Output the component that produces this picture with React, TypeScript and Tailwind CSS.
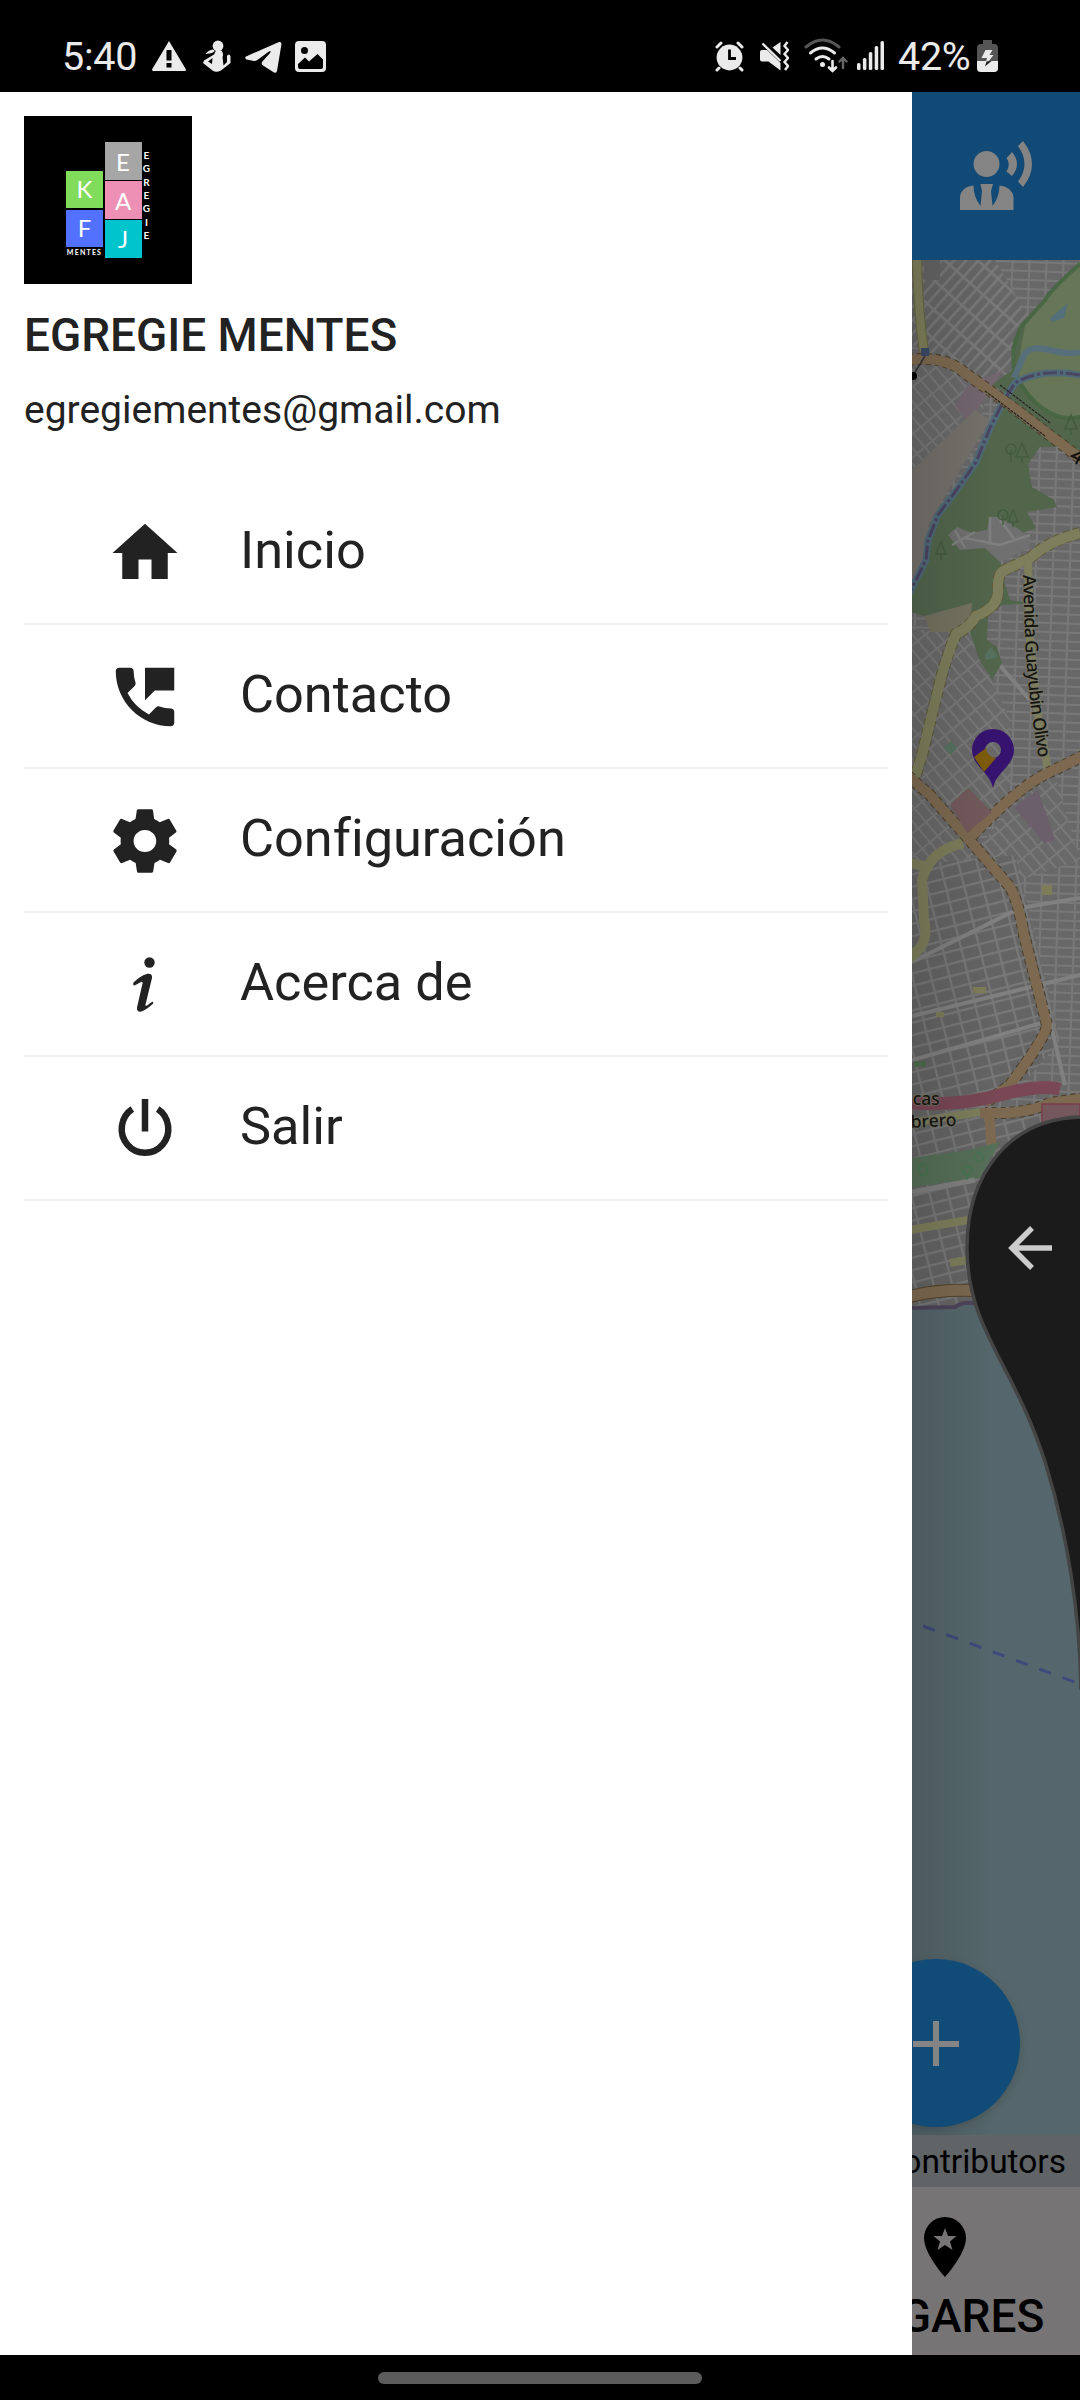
import type { ComponentType, ReactNode } from "react";
import { IoMdSettings } from "react-icons/io";
import { MdHome, MdPermPhoneMsg } from "react-icons/md";

type IconType = ComponentType<{ size?: number; className?: string }>;

function InfoIcon({ size = 78, className }: { size?: number; className?: string }) {
  return (
    <svg width={size} height={size} viewBox="0 0 78 78" className={className} fill="currentColor">
      <circle cx="43.500" cy="16.500" r="5.200" />
      <path d="M27.500 36.500Q34 30 41.500 27.800Q46.500 27 46 32L39.500 58.500Q39 60.500 41 59.500L46.500 55.500L47.500 57.300Q41 63.500 35.500 65.500Q30.500 66.500 31 61.500L36.500 37.500Q37 35 35 36L28.500 39.500Q26.500 39 27.500 36.500Z" />
    </svg>
  );
}

function PowerIcon({ size = 78, className }: { size?: number; className?: string }) {
  return (
    <svg width={size} height={size} viewBox="0 0 78 78" className={className} fill="none" stroke="currentColor" strokeWidth="6.500">
      <path d="M39 9V41.500" />
      <path d="M26.300 19A23.300 23.800 0 1 0 51.700 19" />
    </svg>
  );
}

const menu: { label: string; Icon: IconType }[] = [
  { label: "Inicio", Icon: MdHome },
  { label: "Contacto", Icon: MdPermPhoneMsg },
  { label: "Configuración", Icon: IoMdSettings },
  { label: "Acerca de", Icon: InfoIcon },
  { label: "Salir", Icon: PowerIcon },
];

function Glyph({ w, h, className = "", children }: { w: number; h: number; className?: string; children: ReactNode }) {
  return (
    <svg width={w} height={h} viewBox={`0 0 ${w} ${h}`} className={"shrink-0 " + className} fill="#ebebeb">
      {children}
    </svg>
  );
}

function StatusBar() {
  return (
    <div className="flex h-[92px] shrink-0 items-start bg-black pt-[36px] pl-[62px] pr-[82px] text-[#ebebeb]">
      <span className="w-[90px] text-[39.5px] leading-[41px] tracking-[-0.2px]">5:40</span>
      <Glyph w={34} h={40}>
        <path d="M17 5 L34 33.5 Q34 35 32.5 35 H1.5 Q0 35 0 33.5 Z" />
        <path d="M14.5 14h5v10.500h-5zM14.500 27h5v4.500h-5z" fill="#000" />
      </Glyph>
      <Glyph w={28} h={40} className="ml-[17px]">
        <circle cx="15" cy="10" r="5.400" />
        <path d="M2.500 18Q5 14 10 13.500L12 15 9 17 3 18ZM13 14.500h5.500Q21 18 19.500 21L20.500 29.500 24 26V20Q26.500 17 27.500 20.500V27L18 34.500Q13 37 9.500 34.500L0 27 1 24.500 11 18.500Z" />
        <path d="M5 25.500l4.500-3.500-.500 6z" fill="#000" />
      </Glyph>
      <Glyph w={37} h={40} className="ml-[14px]">
        <path d="M1 20.500Q-1 22 1.500 23.500L9 25Q11 25 13 23.500L24 15.500Q27 14.500 25 17L17 26Q16 28 18 29.500L29 36.500Q31.500 37.500 32 35L36.500 8Q36.500 5.500 34 6Z" />
      </Glyph>
      <Glyph w={31} h={40} className="ml-[13px]">
        <rect y="5" width="31" height="31" rx="4" />
        <path d="M3 28l7-6.500 4 4L22.500 18l5.500 5.500V31q0 2-2 2H5q-2 0-2-2z" fill="#000" />
        <circle cx="9.500" cy="14.500" r="3.500" fill="#000" />
      </Glyph>

      <div className="flex-1" />

      <Glyph w={29} h={40}>
        <circle cx="14.500" cy="21.500" r="12.900" />
        <path d="M2 11l4-4M27 11l-4-4M4 32l-2 2M25 32l2 2" stroke="#ebebeb" strokeWidth="3" strokeLinecap="round" />
        <path d="M14.500 13.500v9h6.500" stroke="#000" strokeWidth="2.800" fill="none" />
      </Glyph>
      <Glyph w={29} h={40} className="ml-[16px]">
        <path d="M0 16q0-2 2-2h5l13.500 13v7.500L8.500 25.500H2q-2 0-2-2zM20.500 6v13L12.500 11.500z" />
        <path d="M2.500 7.500L20.500 25" stroke="#ebebeb" strokeWidth="2.400" />
        <path d="M27.500 6l-3 4 3.500 4-3.500 4 3.500 4-3.500 4 3.500 4-3 4" fill="none" stroke="#ebebeb" strokeWidth="2.400" />
      </Glyph>
      <Glyph w={44} h={40} className="ml-[15px]">
        <g fill="none" strokeLinecap="round" strokeWidth="3">
          <path d="M2 11Q18.500-3 35 11" stroke="#555" />
          <path d="M6.500 17Q18.500 7 30.500 17" stroke="#ebebeb" />
          <path d="M12 23Q18.500 18 25 23" stroke="#ebebeb" />
          <path d="M28.500 25v10M25 31.500l3.500 3.500 3.500-3.500" stroke="#ebebeb" strokeWidth="2.600" />
          <path d="M39 32V22M35.500 25.500L39 22l3.500 3.500" stroke="#666" strokeWidth="2.400" />
        </g>
        <circle cx="18.500" cy="28.500" r="2.500" />
      </Glyph>
      <Glyph w={28} h={40} className="ml-[9px]">
        <rect x="0" y="27" width="3.500" height="7" rx="1.500" />
        <rect x="5.900" y="22" width="3.500" height="12" rx="1.500" />
        <rect x="11.800" y="16" width="3.500" height="18" rx="1.500" />
        <rect x="17.700" y="10" width="3.500" height="24" rx="1.500" />
        <rect x="23.500" y="5" width="3.500" height="29" rx="1.500" />
      </Glyph>
      <span className="ml-[13px] w-[79px] text-[39.5px] leading-[41px] tracking-[-0.3px]">42%</span>
      <Glyph w={21} h={40}>
        <path d="M6 4h9v4h2q4 0 4 4v20q0 4-4 4H4q-4 0-4-4V12q0-4 4-4h2z" fill="#555" />
        <path d="M0 25h21v7q0 4-4 4H4q-4 0-4-4z" />
        <path d="M8.500 14h7l-3 5h4L8 30l2-8H4.500z" />
        <path d="M12 25h2.500L8 30.500l1.500-5z" fill="#222" />
      </Glyph>
    </div>
  );
}

function Tile({ letter, className }: { letter: string; className: string }) {
  return <div className={"flex w-[37px] items-center justify-center font-[Lato] text-[24px] leading-none font-normal text-white " + className}>{letter}</div>;
}

function Logo() {
  return (
    <div className="flex size-[168px] items-start bg-black pt-[26px] pl-[42px] text-white">
      <div className="flex w-[37px] flex-col pt-[29px]">
        <Tile letter="K" className="h-[37px] bg-[#82dc5b] pb-px" />
        <Tile letter="F" className="mt-[2px] h-[37px] bg-[#5271ff] pb-px" />
        <span className="mt-[1px] text-center font-[Lato] text-[7px] leading-[8px] font-bold tracking-[1.2px] whitespace-nowrap">MENTES</span>
      </div>
      <div className="ml-[1.500px] flex w-[37px] flex-col gap-[1px]">
        <Tile letter="E" className="h-[38px] bg-[#a6a6a6] pt-px" />
        <Tile letter="A" className="h-[38px] bg-[#ee90b5] pt-px" />
        <Tile letter="J" className="h-[38px] bg-[#00c4cc] pb-px" />
      </div>
      <div className="mt-[7px] ml-[1px] flex w-[8px] flex-col items-center font-[Lato] text-[10px] leading-[13.33px] font-bold">
        {"EGREGIE".split("").map((c, i) => (
          <span key={i}>{c}</span>
        ))}
      </div>
    </div>
  );
}

function Drawer() {
  return (
    <aside className="relative z-10 flex w-[912px] shrink-0 flex-col bg-white px-[24px] pt-[24px] text-[#222]">
      <Logo />
      <h1 className="mt-[25px] text-[45.9px] leading-[52px] font-medium">EGREGIE MENTES</h1>
      <p className="mt-[26px] text-[39px] leading-[46px]">egregiementes@gmail.com</p>
      <nav className="mt-[48px]">
        {menu.map(({ label, Icon }) => (
          <div key={label} className="flex h-[144px] items-center border-b-2 border-[#eee] pl-[81.5px]">
            <Icon size={78} className="mt-[2px]" />
            <span className="ml-[56.5px] pb-[4px] text-[52.3px] leading-[60px] [font-variant-ligatures:none]">{label}</span>
          </div>
        ))}
      </nav>
    </aside>
  );
}

function MapView() {
  return (
    <svg width="168" height="1875" viewBox="912 260 168 1875" className="block shrink-0">
      <defs>
        <pattern id="diag" width="9" height="22" patternUnits="userSpaceOnUse" patternTransform="rotate(42)">
          <rect width="9" height="22" fill="#666" />
          <path d="M0 0H9M0 0V22" stroke="#797979" strokeWidth="5" />
        </pattern>
        <pattern id="grid" width="17" height="9" patternUnits="userSpaceOnUse" patternTransform="rotate(2)">
          <rect width="17" height="9" fill="#686868" />
          <path d="M0 0H17M0 0V9" stroke="#787878" strokeWidth="4" />
        </pattern>
        <pattern id="tilt" width="18" height="12" patternUnits="userSpaceOnUse" patternTransform="rotate(-14)">
          <rect width="18" height="12" fill="#646464" />
          <path d="M0 0H18M0 0V12" stroke="#787878" strokeWidth="4.500" />
        </pattern>
        <pattern id="slant" width="10" height="18" patternUnits="userSpaceOnUse" patternTransform="rotate(-40)">
          <rect width="10" height="18" fill="#696969" />
          <path d="M0 0H10M0 0V18" stroke="#787878" strokeWidth="4" />
        </pattern>
        <linearGradient id="edge" x1="0" x2="1">
          <stop offset="0" stopColor="#000" stopOpacity=".12" />
          <stop offset=".5" stopColor="#000" stopOpacity="0" />
        </linearGradient>
      </defs>

      <rect x="912" y="260" width="168" height="1080" fill="url(#grid)" />
      <path d="M912 260H995L1030 320 1010 400 912 345Z" fill="url(#diag)" />
      <path d="M912 355L990 380 972 455 912 480Z" fill="url(#slant)" />
      <path d="M912 630H968L1010 720 1010 810 912 850Z" fill="url(#slant)" />
      <path d="M912 790L980 845 1050 760 1080 860 1020 880 912 880Z" fill="url(#slant)" />
      <path d="M912 865L1015 855 1060 1040 1010 1100 912 1105Z" fill="url(#tilt)" />
      <path d="M912 1110H1080V1345H912Z" fill="url(#tilt)" />
      <path d="M912 962L1020 908 1080 898M912 1016L1080 975M912 1060L1045 1022M960 620L1030 700M1045 1000L1065 1085" stroke="#808080" strokeWidth="4" fill="none" />

      <path d="M924 260h16v20h-16z" fill="#646464" />
      <path d="M968 385L1003 370 968 424 955 405Z" fill="#73666f" />
      <path d="M912 470L975 410 990 420 960 470 928 525 926 555 912 585Z" fill="#74716b" />

      <path d="M1080 262L1062 280 1045 300 1025 322 1013 340 1015 368 992 385 1004 392 992 430 976 462 958 488 938 515 928 540 926 560 912 590V612L924 616 972 603 970 632 978 657 992 680 1002 663 997 647 987 640 988 617 1002 605 1035 604 1010 600 1004 580 1000 560 988 548 1030 530 1036 528 1027 512 1057 507 1054 500 1032 487 1028 464 1040 447 1067 447 1080 457Z" fill="#52664c" />
      <path d="M1080 262L1045 300 1025 325 1017 372Q1045 430 1080 415Z" fill="#667657" />
      <path d="M1080 264Q1050 290 1045 300L1020 328 1013 350 1014 375Q1045 425 1080 417" fill="none" stroke="#44653f" strokeWidth="4" opacity=".8" />
      <path d="M1050 318L1068 303 1064 318 1052 322Z" fill="#54707a" />
      <path d="M1014 378L1024 355Q1030 345 1050 350T1080 352" fill="none" stroke="#566f7b" strokeWidth="6" />
      <path d="M1080 375Q1040 368 1015 383L1004 400 990 428 976 462 958 488 938 515 928 540 926 560 908 596" fill="none" stroke="#506a78" strokeWidth="7" />
      <path d="M1080 375Q1040 368 1015 383L1004 400 990 428 976 462 958 488 938 515 928 540 926 560 908 596" fill="none" stroke="#4a4561" strokeWidth="3" strokeDasharray="14 3 3 3" />

      <path d="M948 535L957 527 972 533 987 530 990 517 1000 517 1020 530 1030 538 1030 548 1000 562 985 548 960 550Z" fill="#707070" />
      <path d="M955 530L965 548M952 545L975 532M965 538L1000 545 1030 535M990 517V545M1000 520L1015 540" stroke="#808080" strokeWidth="2.500" fill="none" />
      <path d="M925 616L972 603 968 632 930 632Z" fill="#74725f" />
      <g fill="none" stroke="#435c3e" strokeWidth="1.500">
        <circle cx="1011" cy="449" r="5" />
        <path d="M1011 450v12M1022 443l-6 14h12zM1022 457v6M1071 415l-6 14h12zM1071 429v6" />
        <circle cx="1003" cy="515" r="5" />
        <path d="M1003 515v10M1013 510l-5 12h10zM1013 522v5M941 542l-5 12h10zM941 554v6" />
      </g>

      <path d="M917 260Q918 310 924 352" stroke="#65663f" strokeWidth="10" fill="none" />
      <path d="M917 260Q918 310 924 352" stroke="#7e7f5a" strokeWidth="8" fill="none" />
      <g fill="none" stroke="#5e5936" strokeWidth="12" strokeDasharray="6 4">
        <path d="M1080 533Q1050 540 1030 558L1005 570Q997 573 998 590T976 616Q970 627 956 634 945 660 938 690L922 755 914 780" />
      </g>
      <g fill="none" stroke="#7d7e5b" strokeWidth="10">
        <path d="M1080 533Q1050 540 1030 558L1005 570Q997 573 998 590T976 616Q970 627 956 634 945 660 938 690L922 755 914 780" />
        <path d="M1028 560L1030 640 1038 715 1048 770" strokeWidth="8" />
        <path d="M963 843Q930 850 922 880L924 920Q930 945 910 957M910 863L928 867" />
        <path d="M910 1123L980 1112M910 1230L968 1220M950 1263L968 1260" strokeWidth="8" />
      </g>
      <g fill="none" stroke="#4c3f2b" strokeWidth="12" strokeDasharray="5 4">
        <path d="M908 360Q945 355 965 373L1010 405 1085 462" />
        <path d="M908 776L930 795 972 843 1010 887Q1018 900 1024 935L1047 1025Q1047 1035 1010 1085L985 1103M1085 755L1050 772Q1020 785 970 838" />
        <path d="M1085 1098L1050 1103Q1030 1112 1005 1113L985 1113" />
      </g>
      <g fill="none" stroke="#7d6950" strokeWidth="10">
        <path d="M908 360Q945 355 965 373L1010 405 1085 462" />
        <path d="M908 776L930 795 972 843 1010 887Q1018 900 1024 935L1047 1025Q1047 1035 1010 1085L985 1103M1085 755L1050 772Q1020 785 970 838" />
        <path d="M1085 1098L1050 1103Q1030 1112 1005 1113L980 1113M989 1113L992 1150" />
      </g>
      <path d="M985 391L1045 436M1000 385L1050 423" stroke="#222" strokeWidth="1.200" strokeDasharray="3 1" />
      <path d="M912 377L925 356" stroke="#333" strokeWidth="1.500" />
      <circle cx="913" cy="376" r="4" fill="#000" />
      <path d="M921 348h8v8h-8z" fill="#3c4a68" />
      <path d="M1080 460l-8-4 10-4M1080 456l-4 8" stroke="#111" strokeWidth="2" fill="none" />

      <path d="M950 805L968 788 992 812 967 833Z" fill="#73595b" />
      <path d="M1014 807L1038 790 1055 840 1044 843Z" fill="#6b5f6b" />
      <path d="M944 748l7-7 6 7-6 7zM985 655l6-8 7 10-12 3z" fill="#56715f" />
      <path d="M1042 885h10v10h-10zM973 987h13v6h-13zM936 1012h8v5h-8z" fill="#7d7d59" />
      <path d="M914 1061h12v6h-12z" fill="#4e6b52" />

      <path d="M912 1103Q960 1106 1000 1095T1060 1089" stroke="#794755" strokeWidth="13" fill="none" />
      <path d="M912 1158L968 1150 1000 1142 980 1178 912 1187Z" fill="#566f58" />
      <path d="M912 1192L975 1180" stroke="#808080" strokeWidth="5" />
      <g fill="none" stroke="#467550" strokeWidth="1.500">
        <ellipse cx="923" cy="1170" rx="4" ry="6" />
        <path d="M962 1170q0-4 5-3 5-1 5 3l-5 6zM967 1176v4" />
        <circle cx="979" cy="1157" r="4" />
      </g>
      <path d="M1042 1104H1080V1125H1042Z" fill="#74585e" stroke="#7a3c4c" strokeWidth="1.500" />

      <path d="M908 1297Q940 1288 985 1291" fill="none" stroke="#54452c" strokeWidth="13" />
      <path d="M908 1297Q940 1288 985 1291" fill="none" stroke="#7d6950" strokeWidth="11" />
      <path d="M912 1308L955 1307Q965 1299 985 1306H1080V2135H912Z" fill="#55676c" />
      <path d="M912 1308L955 1307Q965 1299 985 1306" fill="none" stroke="#4e445b" strokeWidth="4" />
      <path d="M923 1626L1080 1684" stroke="#3e4a7c" strokeWidth="3" strokeDasharray="12.500 12.300" />

      <path id="avenue" d="M1023 575L1025 640Q1028 700 1039 760" fill="none" />
      <g fill="#16160f" stroke="#77776a" strokeWidth="1.500" paintOrder="stroke" fontFamily="'Noto Sans', sans-serif" fontWeight="500">
        <text x="908" y="1105" fontSize="17.500">icas</text>
        <text x="911" y="1128" fontSize="17.500" transform="rotate(-3 911 1128)">brero</text>
        <text fontSize="18">
          <textPath href="#avenue" textLength="184">Avenida Guayubin Olivo</textPath>
        </text>
      </g>

      <path d="M993 729a21 21 0 0 1 21 21c0 16-18 22-21 38-3-16-21-22-21-38a21 21 0 0 1 21-21zm0 13a8 8 0 1 0 0 16 8 8 0 0 0 0-16z" fill="#36136f" />
      <path d="M974 757l12-9q1 9 10 10l-12 14z" fill="#7d5b0a" />

      <rect x="912" y="260" width="168" height="1875" fill="url(#edge)" />
      <path d="M1086 1117C1008 1117 967 1175 967 1248C967 1330 1015 1365 1046 1465C1066 1530 1080 1610 1081 1690" fill="#1b1b1b" stroke="#444" strokeWidth="3.500" />
      <path d="M1052 1248H1012M1032 1228L1012 1248 1032 1268" fill="none" stroke="#ccc" strokeWidth="5.500" />
    </svg>
  );
}

function Backdrop() {
  return (
    <main className="relative flex w-[168px] flex-col overflow-hidden">
      <header className="flex h-[168px] shrink-0 bg-[#114a76] pt-[48px] pl-[48px]">
        <svg width="73" height="72" viewBox="0 0 73 72" fill="#848484">
          <circle cx="26.500" cy="24" r="13" />
          <path d="M0 70V57Q1 47 13.500 45.500 13.500 57 20.500 66L22 51 20.500 44H33L31 51 32.500 66Q39.500 57 39.500 45.500 52 47 53.500 57V70Z" />
          <path d="M46.500 31.500Q51 24 46.500 18L52 12Q62 24 52 36ZM58 41.500Q71 24 58 6L63 1Q81 24 63 47Z" />
        </svg>
      </header>
      <MapView />
      <div className="absolute top-[1867px] -left-[60px] flex size-[168px] items-center justify-center rounded-full bg-[#114b77] shadow-[0_3px_10px_rgba(0,0,0,0.15)]">
        <svg width="46" height="46" viewBox="0 0 46 46">
          <path d="M0 24H46M23 1V46" stroke="#848484" strokeWidth="6" />
        </svg>
      </div>
      <div className="flex h-[52px] shrink-0 justify-end bg-[#606466] pr-[14px] text-[33.5px] leading-[53px] whitespace-nowrap text-black">© OpenStreetMap contributors</div>
      <footer className="flex h-[168px] shrink-0 justify-end bg-[#767475]">
        <div className="flex w-[270px] shrink-0 flex-col items-center pt-[30px] text-black">
          <svg width="42" height="60" viewBox="0 0 42 60">
            <path fillRule="evenodd" d="M21 0A21 21 0 0 0 0 21C0 37 21 60 21 60S42 37 42 21A21 21 0 0 0 21 0ZM21 11L24 19H32.500L26 24.500 28.500 33 21 28 13.500 33 16 24.500 9.500 19H18Z" />
          </svg>
          <span className="mt-[13px] text-[46px] leading-[53px] font-medium">LUGARES</span>
        </div>
      </footer>
    </main>
  );
}

export default function App() {
  return (
    <div className="flex h-[2400px] w-[1080px] flex-col overflow-hidden bg-black font-[Roboto,sans-serif]">
      <StatusBar />
      <div className="flex h-[2263px] shrink-0">
        <Drawer />
        <Backdrop />
      </div>
      <div className="flex flex-1 items-center justify-center">
        <div className="h-[12px] w-[324px] rounded-full bg-[#5c5c5c]" />
      </div>
    </div>
  );
}
